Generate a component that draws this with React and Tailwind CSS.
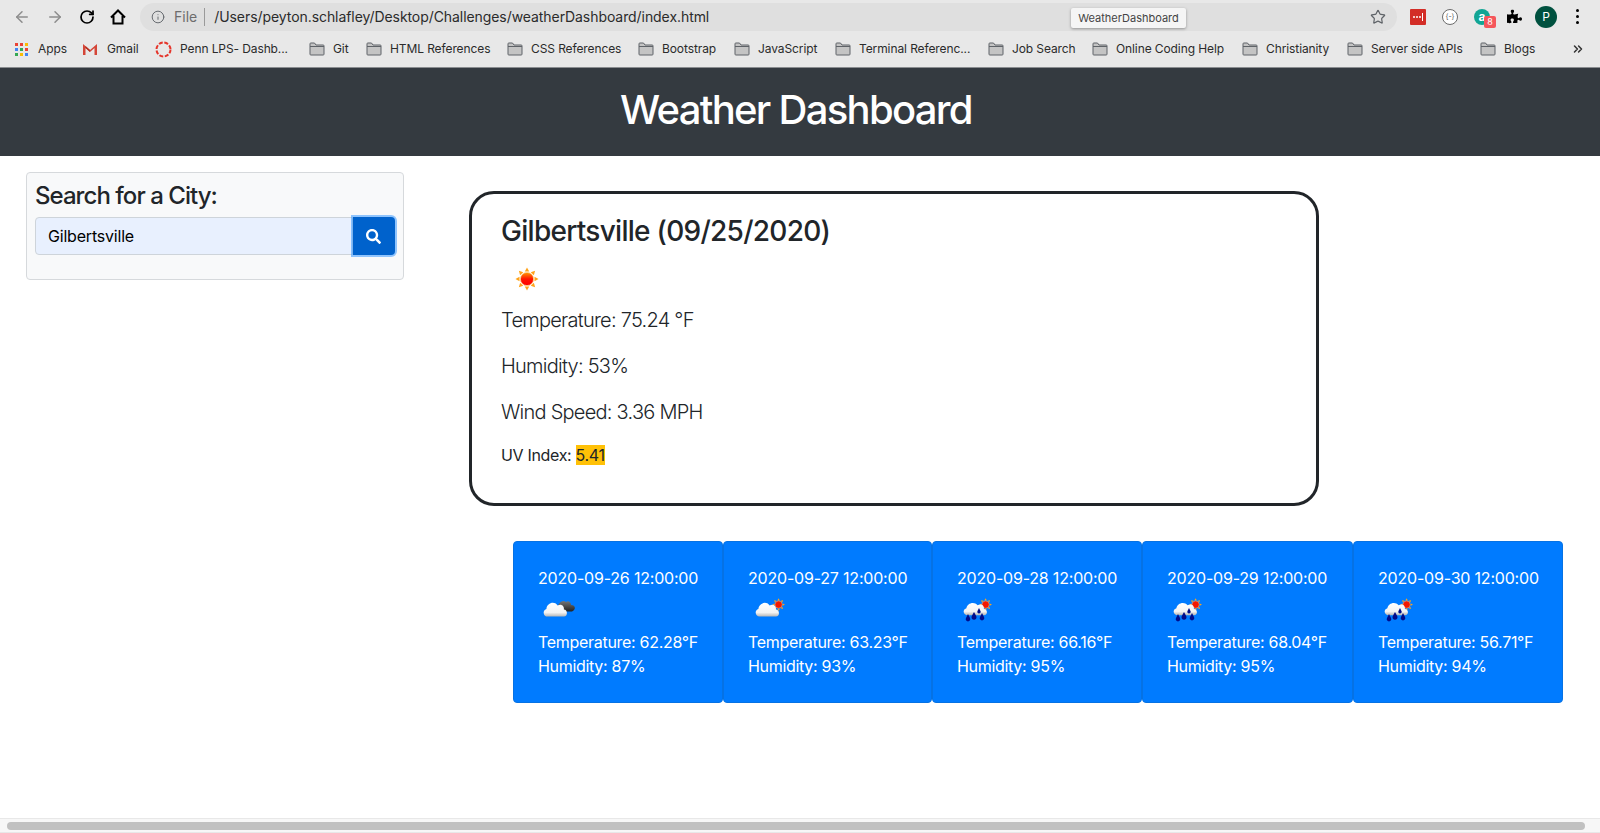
import React from 'react'
import { ArrowLeft, ArrowRight, RotateCw, Info, Star, ChevronsRight } from 'lucide-react'
import { FaSearch, FaPuzzlePiece } from 'react-icons/fa'

const bookmarks = [
  { label: 'Git', w: 'w-[16px]' },
  { label: 'HTML References', w: 'w-[100px]' },
  { label: 'CSS References', w: 'w-[90px]' },
  { label: 'Bootstrap', w: 'w-[55px]' },
  { label: 'JavaScript', w: 'w-[60px]' },
  { label: 'Terminal Referenc...', w: 'w-[112px]' },
  { label: 'Job Search', w: 'w-[63px]' },
  { label: 'Online Coding Help', w: 'w-[109px]' },
  { label: 'Christianity', w: 'w-[64px]' },
  { label: 'Server side APIs', w: 'w-[92px]' },
  { label: 'Blogs', w: 'w-[32px]' },
]

const forecast = [
  { date: '2020-09-26 12:00:00', temp: '62.28', hum: '87', icon: 'night', w: 'w-[210px]' },
  { date: '2020-09-27 12:00:00', temp: '63.23', hum: '93', icon: 'cloud', w: 'w-[209px]' },
  { date: '2020-09-28 12:00:00', temp: '66.16', hum: '95', icon: 'rain', w: 'w-[210px]' },
  { date: '2020-09-29 12:00:00', temp: '68.04', hum: '95', icon: 'rain', w: 'w-[211px]' },
  { date: '2020-09-30 12:00:00', temp: '56.71', hum: '94', icon: 'rain', w: 'w-[210px]' },
]

function Folder() {
  return (
    <svg width="16" height="14" viewBox="0 0 16 14" className="shrink-0">
      <path d="M1 3 V1.8 Q1 1 1.8 1 H5.5 L7 3 H14.2 Q15 3 15 3.8 V12.2 Q15 13 14.2 13 H1.8 Q1 13 1 12.2 Z" fill="#c4c4c4" stroke="#5f6368" strokeWidth="1" />
      <path d="M1 4.5 H15" stroke="#5f6368" strokeWidth="1" />
    </svg>
  )
}

function AppsIcon() {
  const colors = ['#ea4335', '#ea4335', '#fbbc04', '#4285f4', '#34a853', '#ea4335', '#34a853', '#fbbc04', '#4285f4']
  return (
    <div className="grid grid-cols-3 gap-[2px] w-[13px] shrink-0">
      {colors.map((c, i) => (
        <span key={i} className="w-[3px] h-[3px]" style={{ background: c }} />
      ))}
    </div>
  )
}

function GmailIcon() {
  return (
    <svg width="14" height="12" viewBox="0 0 14 12" className="shrink-0">
      <path d="M0 1 L7 7 L14 1 V12 H11.5 V5 L7 9 L2.5 5 V12 H0 Z" fill="#d44638" />
      <path d="M2.5 12 V5 L7 9 L7 7 L2.5 3 Z" fill="#b23121" />
    </svg>
  )
}

function PennIcon() {
  return (
    <svg width="17" height="17" viewBox="0 0 17 17" className="shrink-0">
      <circle cx="8.5" cy="8.5" r="7" fill="none" stroke="#e5352b" strokeWidth="2" strokeDasharray="4 1.6" />
    </svg>
  )
}

function HomeIcon() {
  return (
    <svg width="16" height="16" viewBox="0 0 16 16" fill="none" stroke="#000" strokeWidth="2" strokeLinejoin="miter">
      <path d="M1 8.5 L8 1.5 L15 8.5 M3.5 7 V14.5 H12.5 V7" />
    </svg>
  )
}

function SunRays({ gradient = false }) {
  const rays = [0, 45, 90, 135, 180, 225, 270, 315]
  return (
    <g>
      {rays.map((r) => (
        <path key={r} d="M12 0.5 L14.2 4.5 H9.8 Z" fill="#ffa319" transform={`rotate(${r} 12 12)`} />
      ))}
      <circle cx="12" cy="12" r="6.6" fill={gradient ? 'url(#sunFill)' : '#f21800'} stroke="#ffd28a" strokeWidth="0.8" />
    </g>
  )
}

function SunIcon() {
  return (
    <svg width="24" height="24" viewBox="0 0 24 24">
      <defs>
        <linearGradient id="sunFill" x1="0" y1="0" x2="0" y2="1">
          <stop offset="0" stopColor="#ff9a00" />
          <stop offset="0.5" stopColor="#ff1500" />
          <stop offset="1" stopColor="#f00" />
        </linearGradient>
      </defs>
      <SunRays gradient />
    </svg>
  )
}

function CloudShape() {
  return <path d="M5 19 C1.5 19 0.5 14.5 4 13.5 C4.5 9.5 10 7.5 13 11 C16 9.5 18.5 11.5 18 14 C21 14 21.5 19 18 19 Z" fill="url(#cloudFill)" />
}

function WeatherIcon({ type }) {
  return (
    <svg width="44" height="30" viewBox="0 0 44 30" className="block">
      <defs>
        <linearGradient id="cloudFill" x1="0" y1="0" x2="0" y2="1">
          <stop offset="0" stopColor="#ffffff" />
          <stop offset="0.7" stopColor="#f4f4f4" />
          <stop offset="1" stopColor="#b5b5b5" />
        </linearGradient>
        <linearGradient id="darkFill" x1="0" y1="0" x2="0" y2="1">
          <stop offset="0" stopColor="#777" />
          <stop offset="1" stopColor="#222" />
        </linearGradient>
      </defs>
      {type === 'night' && (
        <g>
          <path d="M20 11 C20 7 25 3 28 6 C31 4 33 7 33 9 C38 9 38 14 34 15.5 H24 Z" fill="url(#darkFill)" />
          <g transform="translate(3.4 -6) scale(1.25 1.4)">
            <CloudShape />
          </g>
        </g>
      )}
      {type === 'cloud' && (
        <g>
          <g transform="translate(24 2) scale(0.55)">
            <SunRays />
          </g>
          <g transform="translate(5.4 -6) scale(1.25 1.4)">
            <CloudShape />
          </g>
        </g>
      )}
      {type === 'rain' && (
        <g>
          <g transform="translate(22 2) scale(0.55)">
            <SunRays />
          </g>
          <g transform="translate(4.4 -4.6) scale(1.25)">
            <CloudShape />
          </g>
          <g fill="#000c8a">
            <path d="M11 18 L13 22 A2.3 2.3 0 1 1 9 22 Z" />
            <path d="M17 16 L19.2 20 A2.5 2.5 0 1 1 14.8 20 Z" />
            <path d="M25 17 L27 21 A2.3 2.3 0 1 1 23 21 Z" />
            <path d="M22 12 L23.5 15 A1.7 1.7 0 1 1 20.5 15 Z" />
          </g>
        </g>
      )}
    </svg>
  )
}

function ForecastCard({ day }) {
  return (
    <div className={`${day.w} h-[162px] shrink-0 bg-[#007bff] border border-[#0672e4] rounded-[4px] pl-[24px] pt-[24px] text-white text-[16px] leading-[24px]`}>
      <p className="tracking-[-0.2px] whitespace-nowrap">{day.date}</p>
      <div className="h-[40px] pt-[6px]">
        <WeatherIcon type={day.icon} />
      </div>
      <p className="tracking-[-0.3px] whitespace-nowrap">Temperature: {day.temp}°F</p>
      <p className="tracking-[-0.3px]">Humidity: {day.hum}%</p>
    </div>
  )
}

function BrowserChrome() {
  return (
    <div className="relative h-[68px] shrink-0 bg-[#e8e8e8] border-b border-[#8a8d90] text-[#2b2b2b]">
      <div className="flex items-center h-[33px]">
        <div className="flex items-center w-[140px] pl-[13px] gap-[15px]">
          <ArrowLeft size={18} strokeWidth={2} className="text-[#8d8d8d]" />
          <ArrowRight size={18} strokeWidth={2} className="text-[#8d8d8d]" />
          <RotateCw size={16} strokeWidth={2.6} className="text-black" />
          <HomeIcon />
        </div>
        <div className="flex items-center h-[28px] w-[1257px] rounded-full bg-[#dfdfdf] pl-[11px] pr-[11px]">
          <Info size={14} strokeWidth={1.6} className="text-[#5f6368]" />
          <span className="ml-[9px] text-[14px] text-[#6d6d6d]">File</span>
          <span className="ml-[7px] h-[18px] w-px bg-[#9a9a9a]" />
          <span className="ml-[9px] text-[14px] tracking-[-0.07px]">/Users/peyton.schlafley/Desktop/Challenges/weatherDashboard/index.html</span>
          <Star size={16} strokeWidth={1.8} className="ml-auto text-[#5f6368]" />
        </div>
        <div className="flex items-center ml-[13px]">
          <div className="flex items-center justify-center gap-[1px] w-[16px] h-[16px] rounded-[1px] bg-[#d32d27]">
            <span className="w-[2px] h-[2px] bg-white rounded-full" />
            <span className="w-[2px] h-[2px] bg-white rounded-full" />
            <span className="w-[2px] h-[2px] bg-white rounded-full" />
            <span className="w-[1px] h-[8px] bg-white" />
          </div>
          <div className="ml-[16px] flex items-center justify-center w-[16px] h-[16px] rounded-full border border-[#6b6b6b] bg-white text-[7px] leading-none text-[#555]">{'{-}'}</div>
          <div className="relative ml-[16px] flex items-center justify-center w-[16px] h-[16px] rounded-full bg-[#12a594] text-white text-[12px] font-bold leading-none">
            a
            <span className="absolute left-[10px] top-[7px] flex items-center justify-center w-[12px] h-[12px] rounded-[2px] bg-[#f5565b] text-[9px] font-normal">8</span>
          </div>
          <FaPuzzlePiece size={15} className="ml-[17px] text-black" />
          <div className="ml-[13px] flex items-center justify-center w-[22px] h-[22px] rounded-full bg-[#00513f] text-white text-[12px]">P</div>
          <div className="ml-[19px] flex flex-col gap-[3px]">
            <span className="w-[3px] h-[3px] rounded-full bg-black" />
            <span className="w-[3px] h-[3px] rounded-full bg-black" />
            <span className="w-[3px] h-[3px] rounded-full bg-black" />
          </div>
        </div>
      </div>
      <div className="flex items-center h-[32px] pl-[15px] text-[12px] tracking-[-0.1px] whitespace-nowrap">
        <AppsIcon />
        <span className="ml-[10px] w-[45px]">Apps</span>
        <GmailIcon />
        <span className="ml-[10px] w-[48px]">Gmail</span>
        <PennIcon />
        <span className="ml-[8px] w-[129px]">Penn LPS- Dashb...</span>
        {bookmarks.map((b) => (
          <div key={b.label} className="flex items-center gap-[8px] mr-[17px]">
            <Folder />
            <span className={b.w}>{b.label}</span>
          </div>
        ))}
        <ChevronsRight size={14} strokeWidth={2.6} className="ml-[18px] text-[#333]" />
      </div>
      <div className="absolute left-[1071px] top-[8px] flex items-center justify-center w-[115px] h-[20px] rounded-[2px] bg-[#f5f5f5] text-[11px] text-[#444] shadow-[0_1px_3px_rgba(0,0,0,0.35)]">
        WeatherDashboard
      </div>
    </div>
  )
}

export default function App() {
  return (
    <div className="flex flex-col h-[833px] overflow-hidden bg-white text-[#212529] font-['Inter','Noto_Sans',sans-serif]">
      <BrowserChrome />

      <header className="h-[88px] shrink-0 flex items-center justify-center pr-[8px] pb-[5px] bg-[#343a40]">
        <h1 className="text-[40px] leading-[48px] font-medium text-white tracking-[-1.7px]">Weather Dashboard</h1>
      </header>

      <div className="flex flex-1 min-h-0">
        {/* Search sidebar */}
        <div className="w-[469px] shrink-0 pl-[26px] pt-[16px]">
          <div className="w-[378px] h-[108px] bg-[#f8f9fa] border border-[#d6d9dc] rounded-[4px] pl-[8px] pr-[8px] pt-[8px]">
            <h4 className="text-[24px] leading-[29px] font-medium tracking-[-0.95px]">Search for a City:</h4>
            <div className="flex mt-[7px] h-[38px]">
              <div className="w-[318px] flex items-center pl-[12px] bg-[#e8f0fe] border border-[#ced4da] rounded-l-[4px] text-[16px] tracking-[-0.2px] text-black">
                Gilbertsville
              </div>
              <button className="w-[42px] flex items-center justify-center pr-[1px] bg-[#0062cc] rounded-r-[4px] text-white shadow-[0_0_0_2px_rgba(38,143,255,0.5)]">
                <FaSearch size={15} />
              </button>
            </div>
          </div>
        </div>

        <div className="flex-1 min-w-0 pt-[35px]">
          {/* Current weather */}
          <div className="w-[850px] h-[315px] border-[3px] border-[#212529] rounded-[25px] pl-[29px] pt-[20px]">
            <h2 className="text-[28px] leading-[34px] font-medium tracking-[-0.72px]">Gilbertsville (09/25/2020)</h2>
            <div className="ml-[14px] mt-[19px]">
              <SunIcon />
            </div>
            <p className="mt-[14px] text-[20px] leading-[30px] font-light tracking-[-0.75px]">Temperature: 75.24 °F</p>
            <p className="mt-[16px] text-[20px] leading-[30px] font-light tracking-[-0.75px]">Humidity: 53%</p>
            <p className="mt-[16px] text-[20px] leading-[30px] font-light tracking-[-0.75px]">Wind Speed: 3.36 MPH</p>
            <p className="mt-[16px] text-[16px] leading-[24px] tracking-[-0.33px]">
              UV Index: <mark className="bg-[#ffc107] text-[#212529]">5.41</mark>
            </p>
          </div>

          {/* 5 day forecast */}
          <div className="flex ml-[44px] mt-[35px]">
            {forecast.map((day) => (
              <ForecastCard key={day.date} day={day} />
            ))}
          </div>
        </div>
      </div>

      {/* Horizontal scrollbar */}
      <div className="h-[15px] shrink-0 flex items-center pl-[7px] pr-[15px] bg-[#f7f7f7] border-t border-b border-[#e8e8e8]">
        <div className="h-[8px] w-full rounded-full bg-[#c1c1c1]" />
      </div>
    </div>
  )
}
